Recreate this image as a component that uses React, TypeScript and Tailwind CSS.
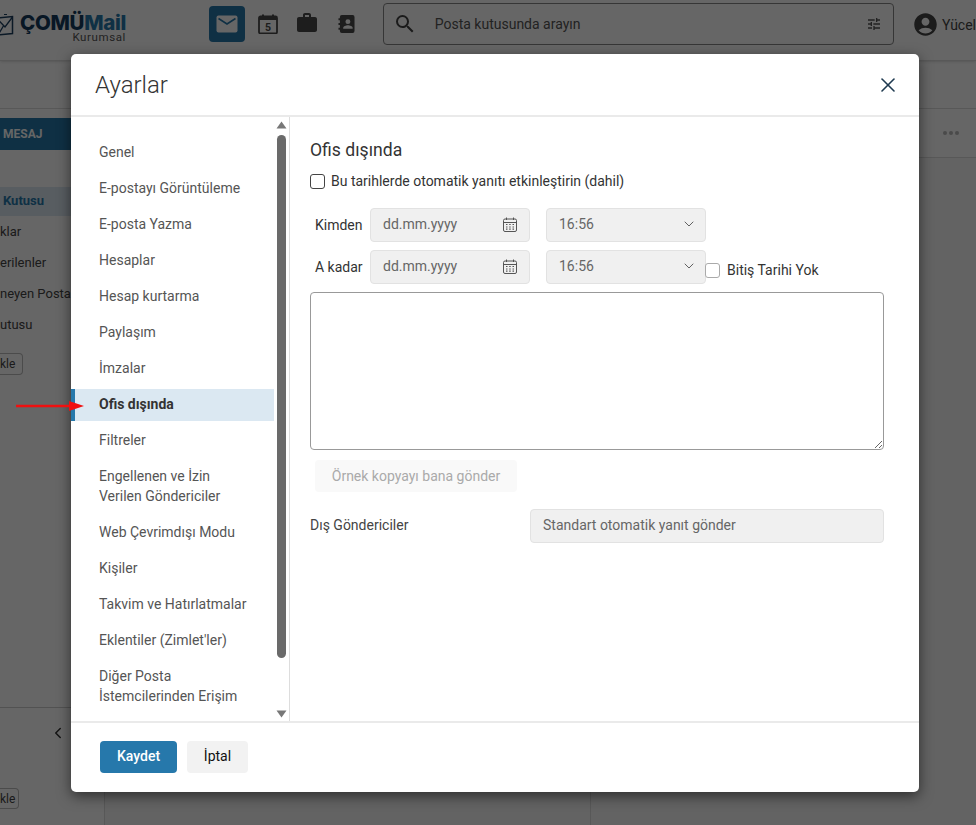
import React from "react";
import { MdAccountCircle, MdSearch, MdTune, MdWork } from "react-icons/md";
import { ChevronDown, ChevronLeft, X } from "lucide-react";

function MailTile() {
  return (
    <div className="flex h-9 w-9 items-center justify-center rounded bg-[#2678ab]">
      <svg width="22" height="18" viewBox="0 0 22 18">
        <rect x="0.5" y="0.5" width="21" height="17" rx="2" fill="#fff" />
        <path d="M2.5 3.5 L11 9 L19.5 3.5" fill="none" stroke="#2678ab" strokeWidth="1.6" />
      </svg>
    </div>
  );
}

function CalendarFive() {
  return (
    <svg width="20" height="20" viewBox="0 0 20 20">
      <path d="M5 0.5v3M15 0.5v3" stroke="#4a4a4a" strokeWidth="2" />
      <rect x="1" y="2.5" width="18" height="17" rx="1.5" fill="none" stroke="#4a4a4a" strokeWidth="1.8" />
      <rect x="1" y="2.5" width="18" height="3.5" fill="#4a4a4a" />
      <text x="10" y="16.5" textAnchor="middle" fontSize="10.5" fontWeight="700" fontFamily="Roboto, sans-serif" fill="#4a4a4a">5</text>
    </svg>
  );
}

function ContactBook() {
  return (
    <svg width="17" height="20" viewBox="0 0 18 20">
      <rect x="2" y="0.5" width="15.5" height="19" rx="2" fill="#4a4a4a" />
      <path d="M0.5 5h3M0.5 10h3M0.5 15h3" stroke="#4a4a4a" strokeWidth="2" />
      <circle cx="10.5" cy="7.5" r="2.6" fill="#fff" />
      <path d="M5.5 15v-1c0-1.8 3-2.8 5-2.8s5 1 5 2.8v1z" fill="#fff" />
    </svg>
  );
}

function DateIcon() {
  return (
    <svg width="14" height="15" viewBox="0 0 14 15" className="shrink-0">
      <path d="M3.5 0.5v2.5M10.5 0.5v2.5" stroke="#555" strokeWidth="1" />
      <rect x="0.5" y="2" width="13" height="12.5" rx="1.5" fill="none" stroke="#555" strokeWidth="1" />
      <path d="M0.5 5.5h13" stroke="#555" strokeWidth="1" />
      <path d="M3 7.5h1.5M6.2 7.5h1.5M9.5 7.5h1.5M3 10h1.5M6.2 10h1.5M9.5 10h1.5M3 12.2h1.5M6.2 12.2h1.5M9.5 12.2h1.5" stroke="#555" strokeWidth="1.2" />
    </svg>
  );
}

function Logo() {
  return (
    <div className="ml-[-4px] flex w-[200px] items-start pt-[14px]">
      <svg width="18" height="26" viewBox="0 0 18 26" className="shrink-0">
        <path d="M0.5 4 L16.5 2.5 V19.5 L2 21" fill="none" stroke="#1d3f60" strokeWidth="1.5" />
        <path d="M1 4.5 L9 13 L16.5 3 M2 21 L8 11" fill="none" stroke="#1d3f60" strokeWidth="1.3" />
        <path d="M8 0.5h3M1 24h3" stroke="#1d3f60" strokeWidth="1" />
      </svg>
      <div className="ml-[6px] flex flex-col">
        <div className="font-['Inter',sans-serif] text-[20.5px] leading-[18px] font-extrabold tracking-[-0.3px] text-[#143a5e]">
          ÇOMÜ<span className="text-[#2678ab]">Mail</span>
        </div>
        <div className="self-end font-['Roboto',sans-serif] text-[11.5px] leading-[10px] tracking-[0.6px] text-[#555]">
          Kurumsal
        </div>
      </div>
    </div>
  );
}

function Header() {
  return (
    <header className="flex h-[61px] items-start border-b border-[#ddd] bg-white shadow-sm">
      <Logo />
      <div className="mt-[6px] ml-[13px]">
        <MailTile />
      </div>
      <div className="mt-[14px] ml-[13px]">
        <CalendarFive />
      </div>
      <div className="mt-[11px] ml-[17px] text-[#4a4a4a]">
        <MdWork size={24} />
      </div>
      <div className="mt-[14px] ml-[19px]">
        <ContactBook />
      </div>
      <div className="mt-[3px] ml-[28px] flex h-[42px] w-[512px] items-center rounded border border-[#888] pr-[11px] pl-[9px]">
        <MdSearch size={24} className="text-[#444]" />
        <span className="ml-[18px] flex-1 text-sm text-[#555]">Posta kutusunda arayın</span>
        <MdTune size={16} className="text-[#555]" />
      </div>
      <div className="mt-[11px] ml-[20px] flex items-center">
        <MdAccountCircle size={27} className="ml-[-2px] text-[#444]" />
        <span className="ml-[3px] text-sm whitespace-nowrap text-[#444]">Yücel</span>
      </div>
    </header>
  );
}

function Sidebar() {
  return (
    <aside className="flex w-[105px] shrink-0 flex-col border-r border-[#ddd] text-[13px] text-[#444]">
      <div className="h-[48px] shrink-0 border-b border-[#ddd]" />
      <div className="mt-[9px] flex h-[32px] shrink-0 items-center bg-[#2678ab] pl-[3px] text-xs font-bold text-white">MESAJ</div>
      <div className="mt-[37px] flex h-[29px] shrink-0 items-center bg-[#dbe8f2] pb-[2px] pl-[3px] font-bold text-[#2678ab]">Kutusu</div>
      <div className="flex h-[31px] shrink-0 items-center">klar</div>
      <div className="flex h-[31px] shrink-0 items-center">erilenler</div>
      <div className="flex h-[31px] shrink-0 items-center whitespace-nowrap">neyen Posta</div>
      <div className="flex h-[31px] shrink-0 items-center">utusu</div>
      <div className="mt-[13px] flex h-[22px] w-[23px] shrink-0 items-center rounded-r border border-l-0 border-[#bbb] text-xs">kle</div>
      <div className="flex-1" />
      <div className="h-[118px] shrink-0 border-t border-[#ccc]">
        <ChevronLeft size={18} className="mt-[16px] ml-[49px] text-[#333]" />
        <div className="mt-[46px] flex h-[21px] w-[19px] items-center rounded-r border border-l-0 border-[#bbb] text-xs">kle</div>
      </div>
    </aside>
  );
}

function Background() {
  return (
    <div className="flex h-[825px] flex-col bg-white">
      <Header />
      <div className="flex min-h-0 flex-1">
        <Sidebar />
        <main className="flex min-w-0 flex-1 flex-col">
          <div className="h-[48px] shrink-0 border-b border-[#ddd]" />
          <div className="flex flex-1">
            <div className="w-[486px] shrink-0 border-r border-[#ddd] bg-[#f8f8f8]" />
            <div className="flex-1 bg-[#f8f8f8]">
              <div className="flex h-[49px] items-center justify-end border-b border-[#ddd] bg-white pr-[17px]">
                <div className="flex gap-[2px]">
                  <span className="h-1 w-1 rounded-full bg-[#b8b8b8]" />
                  <span className="h-1 w-1 rounded-full bg-[#b8b8b8]" />
                  <span className="h-1 w-1 rounded-full bg-[#b8b8b8]" />
                </div>
              </div>
            </div>
          </div>
        </main>
      </div>
    </div>
  );
}

const navItems: string[][] = [
  ["Genel"],
  ["E-postayı Görüntüleme"],
  ["E-posta Yazma"],
  ["Hesaplar"],
  ["Hesap kurtarma"],
  ["Paylaşım"],
  ["İmzalar"],
  ["Ofis dışında"],
  ["Filtreler"],
  ["Engellenen ve İzin", "Verilen Göndericiler"],
  ["Web Çevrimdışı Modu"],
  ["Kişiler"],
  ["Takvim ve Hatırlatmalar"],
  ["Eklentiler (Zimlet'ler)"],
  ["Diğer Posta", "İstemcilerinden Erişim"],
];

function SettingsNav() {
  return (
    <div className="flex w-[219px] shrink-0 border-r border-[#ddd]">
      <nav className="flex w-[203px] shrink-0 flex-col gap-1 pt-[20px]">
        {navItems.map((lines) => {
          const active = lines[0] === "Ofis dışında";
          return (
            <div
              key={lines[0]}
              className={
                active
                  ? "border-l-4 border-[#2678ab] bg-[#dbe8f2] pt-[5px] pb-[7px] pl-6 text-sm leading-5 font-bold text-[#333]"
                  : "border-l-4 border-transparent pt-[5px] pb-[7px] pl-6 text-sm leading-5 text-[#555]"
              }
            >
              {lines.map((l) => (
                <div key={l} className="whitespace-nowrap">
                  {l}
                </div>
              ))}
            </div>
          );
        })}
      </nav>
      <div className="ml-[3px] flex w-[9px] flex-col items-center pt-[4px] pb-[3px]">
        <svg width="11" height="8" viewBox="0 0 11 8" className="shrink-0"><path d="M5.5 0.5 L10.5 7.5 H0.5 Z" fill="#777" /></svg>
        <div className="mt-[6px] h-[523px] w-[9px] shrink-0 rounded-full bg-[#6a6a6a]" />
        <div className="flex-1" />
        <svg width="11" height="8" viewBox="0 0 11 8" className="shrink-0"><path d="M5.5 7.5 L10.5 0.5 H0.5 Z" fill="#777" /></svg>
      </div>
    </div>
  );
}

function DateField() {
  return (
    <div className="flex h-[34px] w-[160px] items-center justify-between rounded border border-[#e2e2e2] bg-[#f0f0f0] px-[12px] pb-[2px] text-sm text-[#666]">
      <span>dd.mm.yyyy</span>
      <DateIcon />
    </div>
  );
}

function TimeField() {
  return (
    <div className="ml-[16px] flex h-[34px] w-[160px] items-center justify-between rounded border border-[#e2e2e2] bg-[#f0f0f0] pr-[8px] pb-[2px] pl-[12px] text-sm text-[#666]">
      <span>16:56</span>
      <ChevronDown size={16} strokeWidth={1.4} className="text-[#555]" />
    </div>
  );
}

function OutOfOffice() {
  return (
    <div className="flex-1 pt-[20px] pr-[35px] pl-[20px]">
      <h2 className="h-[26px] text-[17.6px] leading-[26px] font-normal text-[#333]">Ofis dışında</h2>
      <label className="mt-[8px] flex h-5 items-center text-sm text-[#333]">
        <input type="checkbox" className="h-[15px] w-[15px] appearance-none rounded-[3px] border border-[#444] bg-white" />
        <span className="ml-[6px]">Bu tarihlerde otomatik yanıtı etkinleştirin (dahil)</span>
      </label>
      <div className="mt-[17px] flex items-center">
        <span className="w-[60px] pl-[5px] text-sm text-[#333]">Kimden</span>
        <DateField />
        <TimeField />
      </div>
      <div className="mt-[8px] flex items-center">
        <span className="w-[60px] pl-[5px] text-sm whitespace-nowrap text-[#333]">A kadar</span>
        <DateField />
        <TimeField />
        <label className="mt-[6px] ml-[-1px] flex items-center text-sm whitespace-nowrap text-[#333]">
          <input type="checkbox" className="h-[15px] w-[15px] appearance-none rounded-[3px] border border-[#aaa] bg-white" />
          <span className="ml-[7px]">Bitiş Tarihi Yok</span>
        </label>
      </div>
      <textarea readOnly className="mt-[8px] block h-[158px] w-[574px] rounded border border-[#999] bg-white" />
      <div className="mt-[10px] ml-[5px] flex h-[32px] w-[202px] items-center justify-center rounded bg-[#f9f9f9] text-sm text-[#aaa]">
        Örnek kopyayı bana gönder
      </div>
      <div className="mt-[17px] flex items-center">
        <span className="w-[220px] pb-[2px] text-sm text-[#444]">Dış Göndericiler</span>
        <div className="flex h-[34px] w-[354px] items-center rounded border border-[#e2e2e2] bg-[#f0f0f0] pb-[2px] pl-[12px] text-sm text-[#666]">
          Standart otomatik yanıt gönder
        </div>
      </div>
    </div>
  );
}

function SettingsModal() {
  return (
    <div className="mt-[54px] ml-[71px] flex h-[738px] w-[848px] flex-col rounded-[5px] bg-white shadow-[0_4px_14px_rgba(0,0,0,0.55)]">
      <div className="flex h-[63px] shrink-0 items-center justify-between border-b-2 border-[#eaeaea] pr-[19px] pl-[24px]">
        <h1 className="text-2xl font-light text-[#333]">Ayarlar</h1>
        <X size={24} strokeWidth={1.6} className="text-[#1f3a50]" />
      </div>
      <div className="flex min-h-0 flex-1">
        <SettingsNav />
        <OutOfOffice />
      </div>
      <div className="flex h-[71px] shrink-0 items-start gap-[10px] border-t-2 border-[#eaeaea] pt-[18px] pl-[29px]">
        <div className="flex h-[32px] w-[77px] items-center justify-center rounded bg-[#2678ab] pb-[2px] text-sm font-medium text-white">Kaydet</div>
        <div className="flex h-[32px] w-[61px] items-center justify-center rounded bg-[#f2f2f2] pb-[2px] text-sm font-normal text-[#111]">İptal</div>
      </div>
    </div>
  );
}

function RedArrow() {
  return (
    <svg width="70" height="14" viewBox="0 0 70 14" className="absolute top-[399px] left-[16px]">
      <path d="M0 5.8 L53 5.8 V8.2 L0 8.2 Z" fill="#f01010" />
      <path d="M53 2 L68 7 L53 12 Z" fill="#f01010" />
    </svg>
  );
}

export default function App() {
  return (
    <div className="relative h-[825px] w-[976px] overflow-hidden font-['Roboto',sans-serif]">
      <Background />
      <div className="absolute inset-0 bg-black/60">
        <SettingsModal />
      </div>
      <RedArrow />
    </div>
  );
}
